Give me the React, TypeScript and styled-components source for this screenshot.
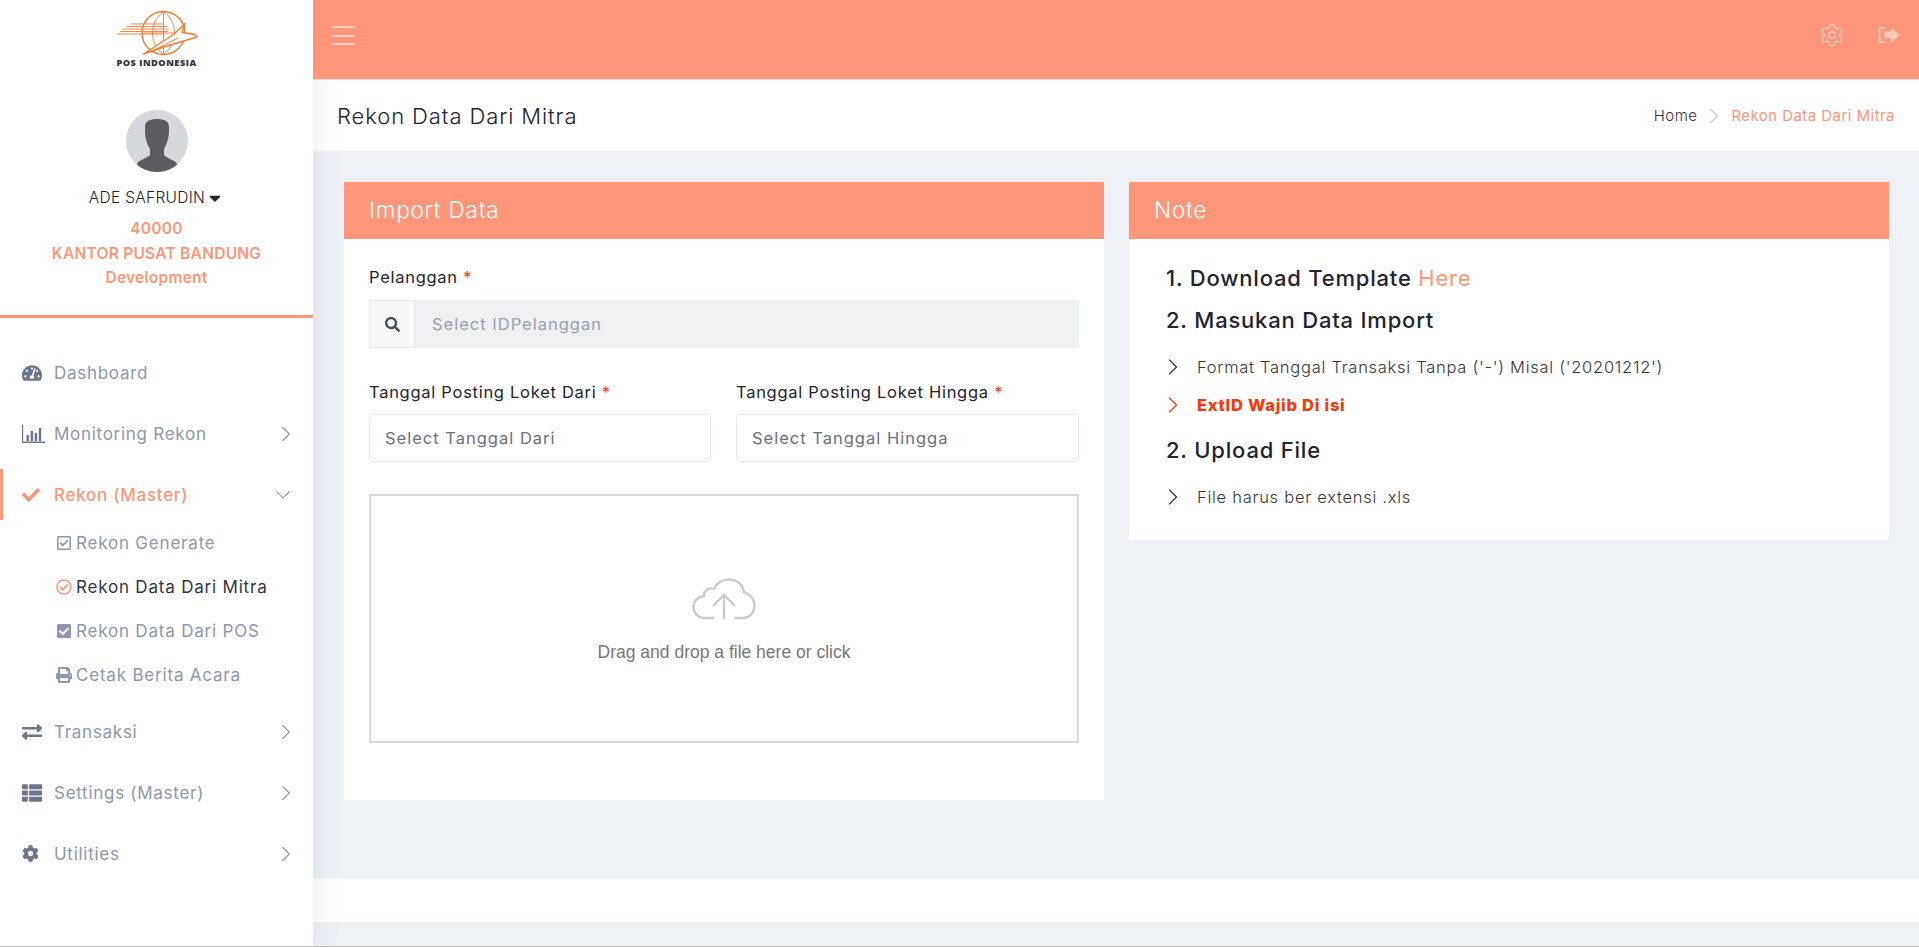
import React from 'react';
import styled, { createGlobalStyle } from 'styled-components';
import { ChevronRight, ChevronDown, Settings as Gear } from 'lucide-react';
import {
  FaTachometerAlt, FaCheck, FaRegCheckSquare, FaRegCheckCircle, FaCheckSquare,
  FaPrint, FaExchangeAlt, FaThList, FaCog, FaCaretDown, FaSearch,
} from 'react-icons/fa';

const ORANGE = '#fe967a';
const FONT = `Inter, "Open Sans", "Liberation Sans", sans-serif`;

const Global = createGlobalStyle`
  html, body { margin: 0; padding: 0; background: #edf0f5; }
  * { box-sizing: border-box; }
  body { font-family: ${FONT}; color: #23232f; overflow: hidden; }
`;

const Page = styled.div`
  display: flex; width: 1919px; height: 947px; overflow: hidden;
  border-bottom: 1px solid #bdbdbd;
`;
const Side = styled.aside`
  width: 313px; flex: none; background: #fff; display: flex; flex-direction: column;
  box-shadow: 4px 0 22px rgba(120, 130, 150, .13); position: relative; z-index: 1;
`;
const LogoBox = styled.div`
  height: 75px; padding-top: 10px; display: flex; flex-direction: column; align-items: center;
`;
const LogoText = styled.div`
  font-family: "Open Sans", sans-serif; font-weight: 800; font-size: 9.2px; letter-spacing: .5px;
  line-height: 10px; color: #33343d; margin-top: 2px; white-space: nowrap;
`;
const Profile = styled.div`
  padding-top: 35px; height: 243px; display: flex; flex-direction: column; align-items: center;
  border-bottom: 3px solid ${ORANGE};
`;
const Avatar = styled.div`
  width: 62px; height: 62px; border-radius: 50%; overflow: hidden; background: #d5d8dc;
  svg { display: block; }
`;
const UserName = styled.div`
  margin-top: 15px; height: 22px; font-size: 15.5px; font-weight: 300; letter-spacing: .3px; line-height: 22px; color: #23232f;
  display: flex; align-items: center; gap: 1px;
`;
const Org = styled.div`
  margin-top: 8px; text-align: center; font-size: 15.6px; line-height: 24.5px; font-weight: 600; letter-spacing: .2px; color: ${ORANGE};
`;
const Menu = styled.nav`
  padding-top: 24px; display: flex; flex-direction: column;
`;
const Item = styled.div<{ $active?: boolean }>`
  height: 61px; flex: none; display: flex; align-items: center; padding: 0 14px 0 22px; position: relative;
  font-size: 17px; letter-spacing: .72px; color: ${p => (p.$active ? ORANGE : '#8d97ad')};
  font-weight: ${p => (p.$active ? 500 : 400)};
  &::before {
    content: ''; display: ${p => (p.$active ? 'block' : 'none')};
    position: absolute; left: 0; top: 5px; bottom: 5px; width: 3px; background: ${ORANGE};
  }
`;
const ItemIcon = styled.span<{ $active?: boolean }>`
  width: 32px; flex: none; display: flex; align-items: center; color: ${p => (p.$active ? ORANGE : '#6c7589')};
`;
const ItemLabel = styled.span`flex: 1; white-space: nowrap;`;
const Arrow = styled.span<{ $down?: boolean }>`
  display: flex; color: #8d97ad; margin-right: ${p => (p.$down ? 4 : 0)}px; font-weight: 400;
`;
const SubMenu = styled.div`
  display: flex; flex-direction: column; padding-left: 56px; margin-top: -4px; margin-bottom: 4px;
`;
const SubItem = styled.div<{ $active?: boolean }>`
  height: 44px; display: flex; align-items: center; gap: 4px; font-size: 17px; white-space: nowrap; letter-spacing: .8px;
  color: ${p => (p.$active ? '#33343d' : '#8d97ad')};
  svg { color: ${p => (p.$active ? ORANGE : '#8d97ad')}; flex: none; }
`;
const Main = styled.div`
  flex: 1; min-width: 0; display: flex; flex-direction: column;
`;
const TopBar = styled.header`
  height: 80px; flex: none; background: ${ORANGE}; display: flex; align-items: center; padding: 0 19px 10px 19px;
  position: relative; z-index: 2; border-bottom: 1px solid #f3dcd5;
`;
const Burger = styled.div`
  width: 23px; display: flex; flex-direction: column; gap: 6.5px; margin-top: 2px;
  span { display: block; height: 2px; background: rgba(255, 255, 255, .55); }
`;
const TopIcons = styled.div`
  margin-left: auto; display: flex; align-items: center; gap: 33px; color: rgba(255, 255, 255, .5);
`;
const SubHeader = styled.div`
  height: 71px; flex: none; background: #fff; display: flex; align-items: center; justify-content: space-between;
  padding: 0 24px;
`;
const PageTitle = styled.div`
  font-size: 22px; font-weight: 300; letter-spacing: .9px; color: #23232f; white-space: nowrap;
`;
const Crumbs = styled.div`
  display: flex; align-items: center; font-size: 15px; font-weight: 300; letter-spacing: .45px; gap: 4px; color: #33343d;
`;
const CrumbNow = styled.span`color: ${ORANGE}; font-weight: 400;`;
const Content = styled.div`
  flex: 1; padding: 31px 30px 0 31px; display: flex; gap: 25px; align-items: flex-start;
`;
const Card = styled.section<{ $h: number }>`
  flex: 1 1 0; background: #fff; height: ${p => p.$h}px;
`;
const CardHead = styled.div`
  height: 57px; padding: 0 25px 2px; background: ${ORANGE}; color: #fff; font-size: 22.5px; font-weight: 300; letter-spacing: .8px;
  display: flex; align-items: center;
`;
const FormBody = styled.div`padding: 27px 25px 24px;`;
const Label = styled.label`
  display: block; font-size: 16.5px; line-height: 22px; font-weight: 400; letter-spacing: .72px; color: #23232f; white-space: nowrap;
  i { font-style: normal; color: #f2400f; }
`;
const SearchGroup = styled.div`
  margin-top: 12px; height: 48px; display: flex; background: #eff0f2;
`;
const Addon = styled.div`
  width: 46px; display: flex; align-items: center; justify-content: center; background: #f8f8f9;
  border: 1px solid #e9ebf0; color: #454f5b;
`;
const Placeholder = styled.div`
  display: flex; align-items: center; padding-left: 17px; font-size: 16.5px; letter-spacing: 1px; color: #9aa0ac;
`;
const Cols = styled.div`
  display: grid; grid-template-columns: 342px 343px; justify-content: space-between; margin-top: 33px;
`;
const DateInput = styled.div`
  margin-top: 11px; height: 48px; border: 1px solid #e7e9ef; border-radius: 4px; display: flex; align-items: center;
  padding-left: 15px; font-size: 16.5px; letter-spacing: 1px; color: #6b6f80;
`;
const Drop = styled.div`
  margin-top: 32px; height: 249px; border: 2px solid #d9d9d9; display: flex; flex-direction: column;
  align-items: center; padding-top: 82px; gap: 22px;
`;
const DropText = styled.div`
  font-family: "Liberation Sans", sans-serif; font-size: 17.5px; line-height: 20px; color: #777;
`;
const NoteBody = styled.div`
  padding: 24px 37px 0;
`;
const NoteTitle = styled.div<{ $mt: number }>`
  margin-top: ${p => p.$mt}px; font-size: 22px; line-height: 30px; font-weight: 500; letter-spacing: .8px; color: #23232f; white-space: nowrap;
  a { color: ${ORANGE}; font-weight: 400; text-decoration: none; }
`;
const Bullet = styled.div<{ $mt: number; $hot?: boolean }>`
  margin-top: ${p => p.$mt}px; height: 24px; display: flex; align-items: center; font-size: 16.5px; letter-spacing: .73px; white-space: nowrap;
  font-weight: ${p => (p.$hot ? 800 : 300)}; color: ${p => (p.$hot ? '#f53a0c' : '#33343d')};
  svg { flex: none; margin: 0 10px 0 -7px; color: ${p => (p.$hot ? '#f53a0c' : '#33343d')}; }
`;
const Footer = styled.footer`
  height: 43px; flex: none; background: #fff; margin-bottom: 24px;
`;

const Chevron = () => <Arrow><ChevronRight size={26} strokeWidth={1} /></Arrow>;

const Logo = () => (
  <svg width="82" height="46" viewBox="0 0 82 46" fill="none" stroke="#f47b30">
    <g>
      <circle cx="47.5" cy="23" r="21.500" strokeWidth="1.4" />
      <path d="M47.5 1.500c-8 6-11 14-11 21.500s3 15.500 11 21.500M47.500 1.500c8 6 11 14 11 21.500s-3 15.500-11 21.500M47.500 1.500v43M26 23h43" strokeWidth=".9" />
      <path d="M1 24h48M4 21.500h48M7 19h46M11 16.500h40M15 14h32" stroke="#f58a4a" strokeWidth="1.100" />
      <path d="M27.500 44L57.500 24.500 69 13.500 66 22.500 79 24.500 81 27 50.700 36z" fill="#fff" strokeWidth="1.400" strokeLinejoin="round" />
      <path d="M36 41L62 28" strokeWidth="1" />
    </g>
  </svg>
);

const Silhouette = () => (
  <svg width="62" height="62" viewBox="0 0 62 62">
    <path fill="#5b5b60" d="M31 9c-7 0-12 2-12 8 0 5 0 8 1 12 .5 3 2 7 4 10v6c-2 3-12 5-13 9l-1 8h42l-1-8c-2-4-11-6-13-9v-6c2-3 3-7 4-10 1-4 1-7 1-12 0-6-5-8-12-8z" />
  </svg>
);

const BarChart = () => (
  <svg width="23" height="18" viewBox="0 0 23 18" fill="#6c7589">
    <path d="M0 0h1.200v16.600H23V18H0z" />
    <path d="M4.500 10h2.400v6H4.500zM8.600 6h2.400v10H8.600zM12.700 8h2.400v8h-2.400zM16.800 3h2.400v13h-2.400z" />
  </svg>
);

const Logout = () => (
  <svg width="22" height="18" viewBox="0 0 22 18" fill="currentColor">
    <path d="M7 1H3.500C1.600 1 .5 2.200.5 4v10c0 1.800 1.100 3 3 3H7v-2H4c-1 0-1.500-.5-1.500-1.500v-9C2.500 3.500 3 3 4 3h3z" />
    <path d="M13 1v4.500H6.500v7H13V17l8.500-8z" />
  </svg>
);

const Cloud = () => (
  <svg width="64" height="42" viewBox="0 0 64 42" fill="none" stroke="#cbcbcb" strokeWidth="2.400">
    <path d="M22 40H13C6 40 1.500 35 1.500 29 1.500 23 6 18.500 12 18 12 12 17 9 22 11 25 4 31 1.500 37 1.500c8 0 14 5 15 13 6 1 10.500 7 10.500 13 0 7-5 12.500-12 12.500h-8" />
    <path d="M32 41V18M21 28l11-11 11 11" />
  </svg>
);

const SmallArrow = () => <ChevronRight size={28} strokeWidth={1} />;

export default function App() {
  return (
    <Page>
      <Global />
      <Side>
        <LogoBox>
          <Logo />
          <LogoText>POS INDONESIA</LogoText>
        </LogoBox>
        <Profile>
          <Avatar><Silhouette /></Avatar>
          <UserName>ADE SAFRUDIN <FaCaretDown size={18} /></UserName>
          <Org>40000<br />KANTOR PUSAT BANDUNG<br />Development</Org>
        </Profile>
        <Menu>
          <Item><ItemIcon><FaTachometerAlt size={20} /></ItemIcon><ItemLabel>Dashboard</ItemLabel></Item>
          <Item><ItemIcon><BarChart /></ItemIcon><ItemLabel>Monitoring Rekon</ItemLabel><Chevron /></Item>
          <Item $active><ItemIcon $active><FaCheck size={18} /></ItemIcon><ItemLabel>Rekon (Master)</ItemLabel><Arrow $down><ChevronDown size={24} strokeWidth={1} /></Arrow></Item>
          <SubMenu>
            <SubItem><FaRegCheckSquare size={16} />Rekon Generate</SubItem>
            <SubItem $active><FaRegCheckCircle size={16} />Rekon Data Dari Mitra</SubItem>
            <SubItem><FaCheckSquare size={16} />Rekon Data Dari POS</SubItem>
            <SubItem><FaPrint size={16} />Cetak Berita Acara</SubItem>
          </SubMenu>
          <Item><ItemIcon><FaExchangeAlt size={20} /></ItemIcon><ItemLabel>Transaksi</ItemLabel><Chevron /></Item>
          <Item><ItemIcon><FaThList size={20} /></ItemIcon><ItemLabel>Settings (Master)</ItemLabel><Chevron /></Item>
          <Item><ItemIcon><FaCog size={17} /></ItemIcon><ItemLabel>Utilities</ItemLabel><Chevron /></Item>
        </Menu>
      </Side>
      <Main>
        <TopBar>
          <Burger><span /><span /><span /></Burger>
          <TopIcons>
            <Gear size={26} strokeWidth={1.3} />
            <Logout />
          </TopIcons>
        </TopBar>
        <SubHeader>
          <PageTitle>Rekon Data Dari Mitra</PageTitle>
          <Crumbs>
            <span>Home</span>
            <ChevronRight size={26} strokeWidth={1} color="#c5ccd8" />
            <CrumbNow>Rekon Data Dari Mitra</CrumbNow>
          </Crumbs>
        </SubHeader>
        <Content>
          <Card $h={618}>
            <CardHead>Import Data</CardHead>
            <FormBody>
              <Label>Pelanggan <i>*</i></Label>
              <SearchGroup>
                <Addon><FaSearch size={15} /></Addon>
                <Placeholder>Select IDPelanggan</Placeholder>
              </SearchGroup>
              <Cols>
                <div>
                  <Label>Tanggal Posting Loket Dari <i>*</i></Label>
                  <DateInput>Select Tanggal Dari</DateInput>
                </div>
                <div>
                  <Label>Tanggal Posting Loket Hingga <i>*</i></Label>
                  <DateInput>Select Tanggal Hingga</DateInput>
                </div>
              </Cols>
              <Drop>
                <Cloud />
                <DropText>Drag and drop a file here or click</DropText>
              </Drop>
            </FormBody>
          </Card>
          <Card $h={358}>
            <CardHead>Note</CardHead>
            <NoteBody>
              <NoteTitle $mt={0}>1. Download Template <a>Here</a></NoteTitle>
              <NoteTitle $mt={12}>2. Masukan Data Import</NoteTitle>
              <Bullet $mt={20}><SmallArrow />Format Tanggal Transaksi Tanpa ('-') Misal ('20201212')</Bullet>
              <Bullet $mt={14} $hot><SmallArrow />ExtID Wajib Di isi</Bullet>
              <NoteTitle $mt={18}>2. Upload File</NoteTitle>
              <Bullet $mt={20}><SmallArrow />File harus ber extensi .xls</Bullet>
            </NoteBody>
          </Card>
        </Content>
        <Footer />
      </Main>
    </Page>
  );
}
